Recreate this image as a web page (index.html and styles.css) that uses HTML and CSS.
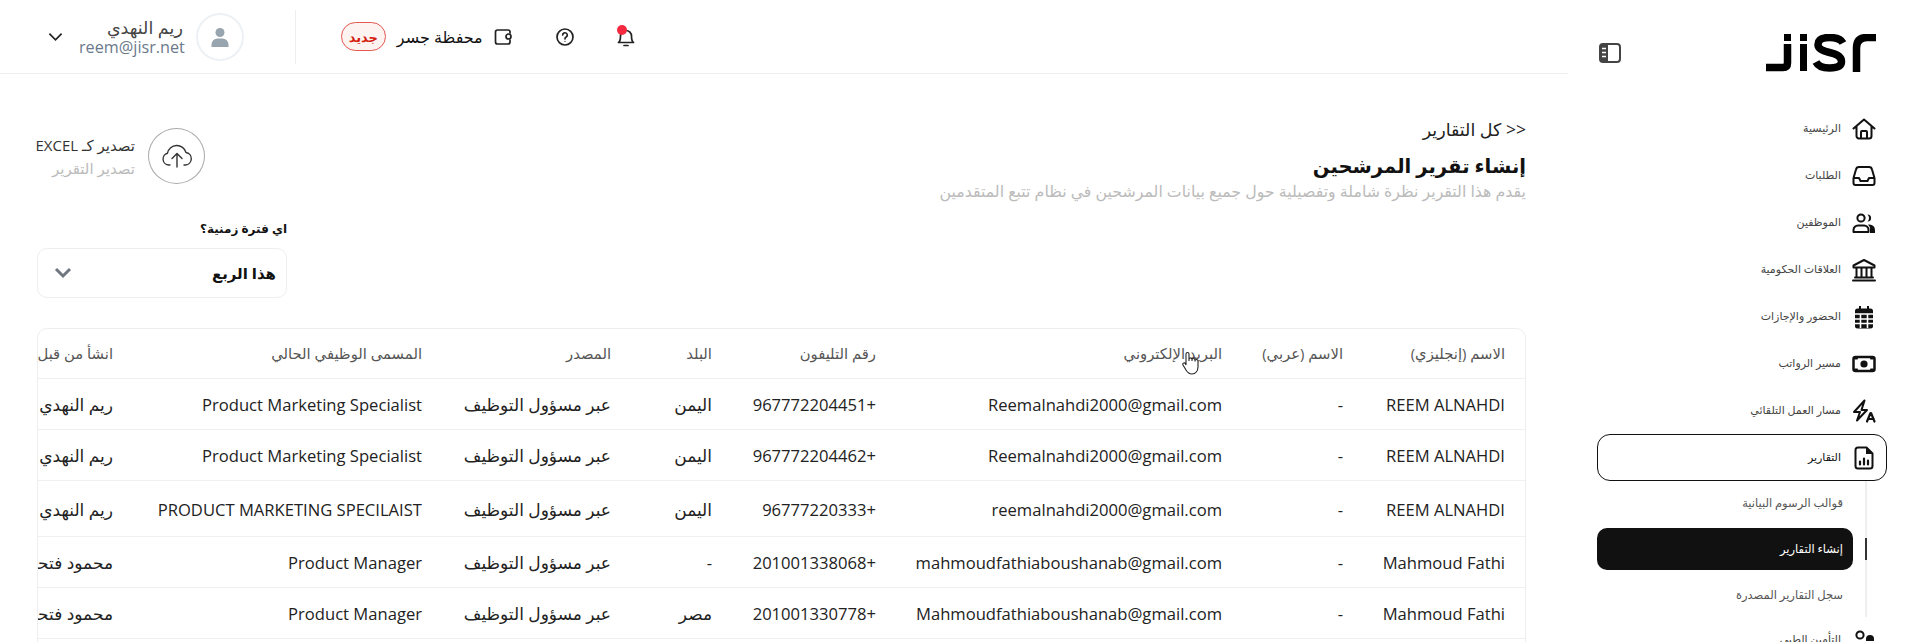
FILE: index.html
```html
<!DOCTYPE html>
<html lang="ar" dir="rtl">
<head>
    <meta charset="UTF-8">
    <meta name="viewport" content="width=device-width, initial-scale=1.0">
    <title>Jisr - إنشاء تقرير المرشحين</title>
    <link rel="stylesheet" href="styles.css">
</head>
<body>
    <aside class="sidebar">
        <div class="brand">
            <svg class="logo" viewBox="0 0 110 38" role="img" aria-label="Jisr">
                <g fill="none" stroke="#000" stroke-width="7.5">
                    <path d="M0 33.500H17Q21.500 33.500 21.500 29V10"/>
                    <path d="M77 9Q74 3.500 63.500 3.500Q52 3.500 52 10.500Q52 16 63.500 18.500Q75.500 21 75.500 27.500Q75.500 34 63.500 34Q53 34 50 28"/>
                    <path d="M90.500 38V14Q90.500 3.500 101 3.500H110"/>
                </g>
                <rect x="18" y="0" width="7" height="7"/>
                <rect x="34" y="0" width="7" height="7"/>
                <rect x="34" y="10" width="7" height="27"/>
            </svg>
            <svg class="toggle" viewBox="0 0 22 20">
                <rect x="1" y="1" width="20" height="18" rx="3" fill="#fff" stroke="#444" stroke-width="2"/>
                <path d="M3 1h6v18H3a2 2 0 0 1-2-2V3a2 2 0 0 1 2-2z" fill="#444"/>
                <path d="M3 5.500h4M3 9.500h4M3 13.500h4" stroke="#fff" stroke-width="1.500"/>
            </svg>
        </div>
        <nav class="nav">
            <a class="nav-item">
                <svg class="nav-icon" viewBox="0 0 24 24"><path d="M1.500 11.500L12 2.500l10.500 9M4.500 9.500V19a2.500 2.500 0 0 0 2.500 2.500h10a2.500 2.500 0 0 0 2.500-2.500V9.500M9 21.500V15a1 1 0 0 1 1-1h4a1 1 0 0 1 1 1v6.500"/></svg>
                الرئيسية
            </a>
            <a class="nav-item">
                <svg class="nav-icon" viewBox="0 0 24 24"><path d="M1.500 14L4 5.500A3 3 0 0 1 7 3h10a3 3 0 0 1 3 2.500L22.500 14v5a2 2 0 0 1-2 2h-17a2 2 0 0 1-2-2zM1.500 14H7l1.500 3h7l1.500-3h5.500"/></svg>
                الطلبات
            </a>
            <a class="nav-item">
                <svg class="nav-icon" viewBox="0 0 24 24"><circle cx="9" cy="7" r="3.600"/><path d="M1.500 21v-2a4.500 4.500 0 0 1 4.500-4.500h6a4.500 4.500 0 0 1 4.500 4.500v2z"/><path class="solid" d="M15.500 3.400a3.600 3.600 0 1 1 0 7.200a5 5 0 0 0 0-7.200zM16 13.500h1.500A5.500 5.500 0 0 1 23 19v3h-5v-3a6 6 0 0 0-2-5.500z"/></svg>
                الموظفين
            </a>
            <a class="nav-item">
                <svg class="nav-icon" viewBox="0 0 24 24"><path d="M12 2L1.500 7.500V9.500h21V7.500zM4.500 10v9M9.500 10v9M14.500 10v9M19.500 10v9M3 19.500h18M1 22.500h22"/></svg>
                العلاقات الحكومية
            </a>
            <a class="nav-item">
                <svg class="nav-icon" viewBox="0 0 24 24"><path class="solid" d="M7 1h2v2.500h6V1h2v2.500h1.500A2.500 2.500 0 0 1 21 6v15a2.500 2.500 0 0 1-2.500 2.500h-13A2.500 2.500 0 0 1 3 21V6a2.500 2.500 0 0 1 2.500-2.500H7z"/><path class="cut" d="M3 9h18M3 14h18M3 18.500h18M8.500 9v14M15.500 9v14"/></svg>
                الحضور والإجازات
            </a>
            <a class="nav-item">
                <svg class="nav-icon" viewBox="0 0 24 24"><rect x="1.500" y="5" width="21" height="14" rx="2" stroke-width="2.500"/><circle class="solid" cx="12" cy="12" r="3.600"/><path d="M3 6.500h2M19 6.500h2M3 17.500h2M19 17.500h2"/></svg>
                مسير الرواتب
            </a>
            <a class="nav-item">
                <svg class="nav-icon" viewBox="0 0 24 24"><path d="M12.500 1.500L2 13h6l-3 8.500L15 11H9.500z"/><path d="M15 22.500l3.500-8.500h.5l3.500 8.500M16.200 20h5.600" stroke-width="2.200"/></svg>
                مسار العمل التلقائي
            </a>
            <a class="nav-item nav-item-open">
                <svg class="nav-icon" viewBox="0 0 24 24"><path d="M6 1.500h8.500L20.500 7.500V20a2.500 2.500 0 0 1-2.500 2.500H6A2.500 2.500 0 0 1 3.500 20V4A2.500 2.500 0 0 1 6 1.500z"/><path class="solid" d="M14 1.500l6.500 6.500H14z"/><path d="M8 18.500v-3M12 18.500v-6M16 18.500v-4" stroke-width="2.200"/></svg>
                التقارير
            </a>
            <div class="subnav">
                <a class="subnav-item">قوالب الرسوم البيانية</a>
                <a class="subnav-item subnav-item-active">إنشاء التقارير</a>
                <a class="subnav-item">سجل التقارير المصدرة</a>
            </div>
            <a class="nav-item nav-item-last">
                <svg class="nav-icon" viewBox="0 0 24 24"><circle cx="8" cy="7" r="3.600"/><path class="solid" d="M14 11a4 4 0 0 1 8 0v2h-8z"/><path d="M2 22v-2a5 5 0 0 1 5-5h10a5 5 0 0 1 5 5v2"/></svg>
                التأمين الطبي
            </a>
        </nav>
    </aside>

    <main class="main">
        <header class="topbar">
            <span class="bell">
                <svg class="top-icon" viewBox="0 0 20 20"><path d="M2.500 15.500h15c-1.500-1-2-3-2-6.500a5.500 5.500 0 0 0-11 0c0 3.500-.5 5.500-2 6.500zM8 18.500h4"/></svg>
                <span class="bell-dot"></span>
            </span>
            <svg class="top-icon help" viewBox="0 0 20 20"><circle cx="10" cy="10" r="8"/><path d="M7.700 8a2.300 2.300 0 1 1 3.400 2.100c-.8.400-1.100.9-1.100 1.700"/><circle class="solid" cx="10" cy="14.300" r=".6"/></svg>
            <svg class="top-icon wallet" viewBox="0 0 20 20"><path d="M17 6V5a2 2 0 0 0-2-2H4.500A2 2 0 0 0 2.500 5v10a2 2 0 0 0 2 2H15a2 2 0 0 0 2-2v-2"/><rect x="13" y="7" width="5" height="5" rx="2.500"/></svg>
            <span class="wallet-label">محفظة جسر</span>
            <span class="badge">جديد</span>
            <span class="top-divider"></span>
            <span class="avatar">
                <svg viewBox="0 0 24 24"><circle cx="12" cy="7.500" r="4.500"/><path d="M3.500 22v-2.500a6 6 0 0 1 6-6h5a6 6 0 0 1 6 6V22z"/></svg>
            </span>
            <div class="user">
                <span class="user-name">ريم النهدي</span>
                <span class="user-mail">reem@jisr.net</span>
            </div>
            <svg class="user-chevron" viewBox="0 0 16 10"><path d="M1.500 1.500L8 8l6.500-6.500"/></svg>
        </header>

        <section class="content">
            <div class="page-head">
                <div class="titles">
                    <a class="back-link">&lt;&lt; كل التقارير</a>
                    <h1>إنشاء تقرير المرشحين</h1>
                    <p>يقدم هذا التقرير نظرة شاملة وتفصيلية حول جميع بيانات المرشحين في نظام تتبع المتقدمين</p>
                </div>
                <div class="export">
                    <span class="export-btn">
                        <svg viewBox="0 0 32 32"><path d="M9 25H8a6 6 0 0 1-1.500-11.800A9.500 9.500 0 0 1 25 12.500 6.300 6.300 0 0 1 24.500 25H23M16 27V14M11 18.500l5-5 5 5"/></svg>
                    </span>
                    <div class="export-text">
                        <span class="export-title">تصدير كـ EXCEL</span>
                        <span class="export-sub">تصدير التقرير</span>
                    </div>
                </div>
            </div>

            <div class="period">
                <label>اي فترة زمنية؟</label>
                <div class="select">
                    <span>هذا الربع</span>
                    <svg viewBox="0 0 18 12"><path d="M2 2l7 7 7-7"/></svg>
                </div>
            </div>

            <div class="table-wrap">
                <table>
                    <colgroup>
                        <col class="col-name">
                        <col class="col-arabic">
                        <col class="col-email">
                        <col class="col-phone">
                        <col class="col-country">
                        <col class="col-source">
                        <col class="col-title">
                        <col class="col-creator">
                    </colgroup>
                    <thead>
                        <tr>
                            <th>الاسم (إنجليزي)</th>
                            <th>الاسم (عربي)</th>
                            <th>البريد الإلكتروني</th>
                            <th>رقم التليفون</th>
                            <th>البلد</th>
                            <th>المصدر</th>
                            <th>المسمى الوظيفي الحالي</th>
                            <th>انشأ من قبل</th>
                        </tr>
                    </thead>
                    <tbody>
                        <tr>
                            <td>REEM ALNAHDI</td>
                            <td>-</td>
                            <td>Reemalnahdi2000@gmail.com</td>
                            <td>+967772204451</td>
                            <td class="ar">اليمن</td>
                            <td class="ar">عبر مسؤول التوظيف</td>
                            <td>Product Marketing Specialist</td>
                            <td class="ar">ريم النهدي</td>
                        </tr>
                        <tr>
                            <td>REEM ALNAHDI</td>
                            <td>-</td>
                            <td>Reemalnahdi2000@gmail.com</td>
                            <td>+967772204462</td>
                            <td class="ar">اليمن</td>
                            <td class="ar">عبر مسؤول التوظيف</td>
                            <td>Product Marketing Specialist</td>
                            <td class="ar">ريم النهدي</td>
                        </tr>
                        <tr class="row-tall">
                            <td>REEM ALNAHDI</td>
                            <td>-</td>
                            <td>reemalnahdi2000@gmail.com</td>
                            <td>+96777220333</td>
                            <td class="ar">اليمن</td>
                            <td class="ar">عبر مسؤول التوظيف</td>
                            <td>PRODUCT MARKETING SPECILAIST</td>
                            <td class="ar">ريم النهدي</td>
                        </tr>
                        <tr>
                            <td>Mahmoud Fathi</td>
                            <td>-</td>
                            <td>mahmoudfathiaboushanab@gmail.com</td>
                            <td>+201001338068</td>
                            <td>-</td>
                            <td class="ar">عبر مسؤول التوظيف</td>
                            <td>Product Manager</td>
                            <td class="ar">محمود فتحي</td>
                        </tr>
                        <tr>
                            <td>Mahmoud Fathi</td>
                            <td>-</td>
                            <td>Mahmoudfathiaboushanab@gmail.com</td>
                            <td>+201001330778</td>
                            <td class="ar">مصر</td>
                            <td class="ar">عبر مسؤول التوظيف</td>
                            <td>Product Manager</td>
                            <td class="ar">محمود فتحي</td>
                        </tr>
                    </tbody>
                </table>
                <svg class="cursor" viewBox="0 0 20 24"><path d="M6 11V3a1.500 1.500 0 0 1 3 0v7-1.500a1.500 1.500 0 0 1 3 0V10v-1a1.500 1.500 0 0 1 3 0v1.500-.5a1.500 1.500 0 0 1 3 0v6c0 4-2.500 7-6 7-3 0-4.500-1.500-6-4l-3-5c-1-1.500 1-3 2.500-1.500L6 14z"/></svg>
            </div>
        </section>
    </main>
</body>
</html>
```

FILE: styles.css
```css
:root {
    --ink: #111111;
    --text: #222222;
    --text-light: #bbbbbb;
    --line: #eeeeee;
}

* {
    box-sizing: border-box;
}

html, body {
    height: 100%;
}

body {
    margin: 0;
    display: flex;
    overflow: hidden;
    background: #fff;
    color: var(--text);
    font-family: "Open Sans", "DejaVu Sans", sans-serif;
}

/* sidebar */
.sidebar {
    width: 348px;
    flex-shrink: 0;
    padding: 0 29px;
    font-family: Roboto, "DejaVu Sans", sans-serif;
}

.brand {
    height: 105px;
    display: flex;
    align-items: center;
    justify-content: space-between;
    padding: 0 11px 0 2px;
}

.logo {
    width: 110px;
    height: 38px;
}

.toggle {
    width: 22px;
    height: 20px;
}

.nav-item {
    height: 47px;
    display: flex;
    align-items: center;
    gap: 11px;
    padding-right: 11px;
    font-size: 11px;
    color: #444;
}

.nav-item-open {
    border: 1px solid var(--ink);
    border-radius: 13px;
    padding-right: 10px;
    color: var(--ink);
}

.nav-item-last {
    margin-top: -1px;
}

.nav-icon {
    width: 24px;
    height: 24px;
    flex-shrink: 0;
    fill: none;
    stroke: var(--ink);
    stroke-width: 2;
    stroke-linejoin: round;
    stroke-linecap: round;
}

.solid {
    fill: var(--ink);
    stroke: none;
}

.cut {
    stroke: #fff;
    stroke-width: 1.6;
    stroke-linecap: butt;
}

.subnav {
    position: relative;
    margin: 0 20px 0 0;
    padding: 1px 12px 1px 0;
    border-right: 2px solid var(--line);
    display: flex;
    flex-direction: column;
    gap: 4px;
}

.subnav-item {
    height: 42px;
    display: flex;
    align-items: center;
    padding-right: 10px;
    border-radius: 10px;
    font-size: 11.5px;
    color: #555;
}

.subnav-item-active {
    position: relative;
    background: var(--ink);
    color: #fff;
}

.subnav-item-active::after {
    content: "";
    position: absolute;
    top: 10px;
    right: -14px;
    width: 2px;
    height: 22px;
    background: #333;
}

/* main area */
.main {
    flex: 1;
    min-width: 0;
}

.topbar {
    height: 74px;
    display: flex;
    align-items: center;
    justify-content: flex-end;
    padding-left: 48px;
    border-bottom: 1px solid #eee;
}

.top-icon {
    width: 20px;
    height: 20px;
    display: block;
    fill: none;
    stroke: #222;
    stroke-width: 1.7;
    stroke-linecap: round;
    stroke-linejoin: round;
}

.bell {
    position: relative;
    display: block;
    margin-left: 41px;
}

.bell-dot {
    position: absolute;
    top: -2px;
    right: 9px;
    width: 10px;
    height: 10px;
    border-radius: 50%;
    background: #f5293f;
}

.help {
    margin-left: 42px;
}

.wallet {
    margin-left: 10px;
}

.wallet-label {
    font-size: 16px;
    color: #111;
    margin-left: 11px;
}

.badge {
    width: 45px;
    height: 29px;
    display: flex;
    align-items: center;
    justify-content: center;
    border: 1px solid #e5564e;
    border-radius: 15px;
    background: #fdf4f1;
    color: #d3200f;
    font-size: 13px;
    font-weight: 700;
    margin-left: 45px;
}

.top-divider {
    width: 1px;
    height: 54px;
    background: #eee;
    margin-left: 51px;
}

.avatar {
    width: 48px;
    height: 48px;
    display: flex;
    align-items: center;
    justify-content: center;
    border: 2px solid #edf1f5;
    border-radius: 50%;
    margin-left: 11px;
}

.avatar svg {
    width: 24px;
    height: 24px;
    fill: #98a5ae;
}

.user {
    display: flex;
    flex-direction: column;
    margin-left: 16px;
}

.user-name {
    padding-right: 2px;
    font-size: 17.5px;
    line-height: 20px;
    color: #444;
}

.user-mail {
    font-size: 16.2px;
    line-height: 20px;
    color: #6b7a8a;
    direction: ltr;
    text-align: right;
}

.user-chevron {
    width: 15px;
    height: 10px;
    fill: none;
    stroke: #222;
    stroke-width: 1.8;
}

.content {
    display: flex;
    flex-direction: column;
    padding: 45px 42px 0 37px;
}

.page-head {
    display: flex;
    justify-content: space-between;
    align-items: flex-start;
}

.back-link {
    display: block;
    font-size: 17.5px;
    font-weight: 500;
    line-height: 20px;
    color: #222;
}

h1 {
    margin: 11px 0 0;
    font-size: 19.6px;
    font-weight: 700;
    line-height: 32px;
    color: #111;
}

.titles p {
    margin: -1px 0 0;
    font-size: 15.8px;
    line-height: 20px;
    color: var(--text-light);
}

.export {
    display: flex;
    align-items: center;
    gap: 13px;
    margin-top: 9px;
}

.export-btn {
    width: 57px;
    height: 56px;
    display: flex;
    align-items: center;
    justify-content: center;
    border: 1px solid #aaa;
    border-radius: 50%;
}

.export-btn svg {
    width: 32px;
    height: 32px;
    fill: none;
    stroke: #333;
    stroke-width: 1.4;
    stroke-linecap: round;
    stroke-linejoin: round;
}

.export-text {
    width: 98px;
    display: flex;
    flex-direction: column;
    gap: 3px;
    white-space: nowrap;
}

.export-title {
    font-size: 15px;
    line-height: 20px;
    color: #333;
}

.export-sub {
    font-size: 15px;
    line-height: 20px;
    color: var(--text-light);
}

.period {
    width: 250px;
    align-self: flex-end;
    margin-top: 18px;
}

.period label {
    display: block;
    font-size: 12px;
    font-weight: 700;
    line-height: 20px;
    color: #111;
}

.select {
    height: 50px;
    margin-top: 9px;
    padding: 0 10px 0 16px;
    display: flex;
    align-items: center;
    justify-content: space-between;
    border: 1px solid var(--line);
    border-radius: 10px;
    font-size: 15px;
    font-weight: 700;
    color: #111;
}

.select svg {
    width: 18px;
    height: 12px;
    fill: none;
    stroke: #6f7780;
    stroke-width: 3;
}

/* table */
.table-wrap {
    position: relative;
    margin-top: 30px;
    height: 330px;
    overflow: hidden;
    border: 1px solid var(--line);
    border-radius: 10px 10px 0 0;
}

table {
    width: 1513px;
    table-layout: fixed;
    border-collapse: collapse;
}

.col-name { width: 162px; }
.col-arabic { width: 121px; }
.col-email { width: 346px; }
.col-phone { width: 164px; }
.col-country { width: 101px; }
.col-source { width: 189px; }
.col-title { width: 309px; }
.col-creator { width: 121px; }

th, td {
    height: 51px;
    padding: 1px 20px 0;
    text-align: right;
    white-space: nowrap;
    border-bottom: 1px solid #f0f0f0;
}

th {
    height: 49px;
    padding-top: 0;
    font-size: 14.8px;
    font-weight: 400;
    color: #555;
}

td {
    font-size: 16.6px;
    color: #222;
}

td.ar {
    font-size: 17px;
}

.row-tall td {
    height: 56px;
    padding-top: 3px;
}

.cursor {
    position: absolute;
    top: 22px;
    left: 1142px;
    width: 20px;
    height: 24px;
    fill: #fff;
    stroke: #222;
    stroke-width: 1.100;
}
```
